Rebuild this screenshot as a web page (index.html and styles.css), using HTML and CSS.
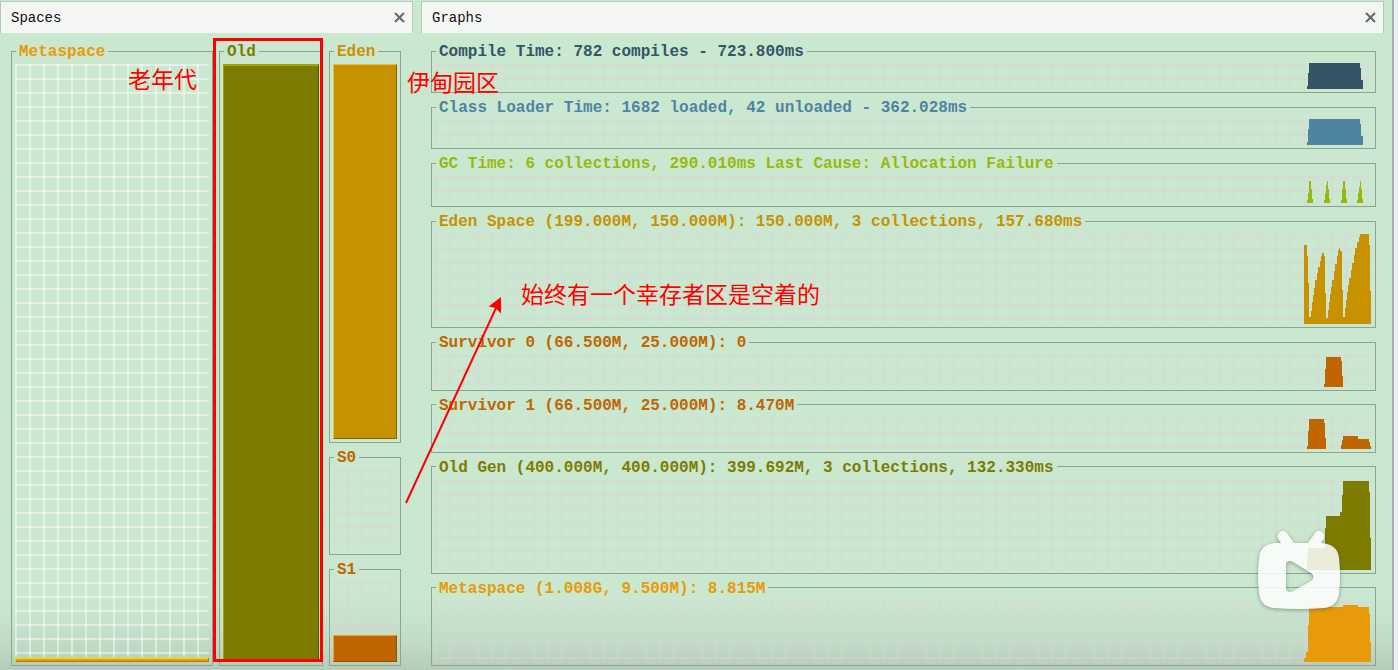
FILE: index.html
```html
<!DOCTYPE html>
<html lang="zh">
<head>
<meta charset="utf-8">
<title>Visual GC</title>
<link rel="stylesheet" href="styles.css">
</head>
<body>
<main class="window">
  <section class="panel">
    <header class="tab">
      <h2 class="tab-title">Spaces</h2>
      <button class="close" type="button" aria-label="Close Spaces"><svg viewBox="0 0 12 12"><path d="M1 1L10 10M10 1L1 10"/></svg></button>
    </header>
    <div class="spaces">
      <fieldset class="group tall meta"><legend>Metaspace</legend>
        <div class="space mesh"><div class="fill" style="height:5px"></div></div></fieldset>
      <fieldset class="group tall old marked"><legend>Old</legend>
        <div class="space"><div class="fill" style="height:100%"></div></div></fieldset>
      <fieldset class="group eden"><legend>Eden</legend>
        <div class="space"><div class="fill" style="height:100%"></div></div></fieldset>
      <fieldset class="group survivor"><legend>S0</legend>
        <div class="space faint"></div></fieldset>
      <fieldset class="group survivor"><legend>S1</legend>
        <div class="space faint"><div class="fill" style="height:34%"></div></div></fieldset>
    </div>
  </section>
  <section class="panel">
    <header class="tab">
      <h2 class="tab-title">Graphs</h2>
      <button class="close" type="button" aria-label="Close Graphs"><svg viewBox="0 0 12 12"><path d="M1 1L10 10M10 1L1 10"/></svg></button>
    </header>
    <div class="graphs">
      <fieldset class="group compile"><legend>Compile Time: 782 compiles - 723.800ms</legend>
        <div class="plot faint"><svg width="72" height="26"><path d="M7 26V23H8V10H9V0H60V5H61V17H63V26z"/></svg></div></fieldset>
      <fieldset class="group loader"><legend>Class Loader Time: 1682 loaded, 42 unloaded - 362.028ms</legend>
        <div class="plot faint"><svg width="72" height="26"><path d="M7 26V23H8V10H9V0H60V5H61V17H63V26z"/></svg></div></fieldset>
      <fieldset class="group gc"><legend>GC Time: 6 collections, 290.010ms Last Cause: Allocation Failure</legend>
        <div class="plot faint"><svg width="72" height="22"><path d="M7 22V19H8V12H9V0H11V8H12V18H13V22zM24 22V19H25V12H26V4H27V0H28V8H29V18H30V22zM41 22V19H42V8H43V0H45V8H46V18H47V22zM57 22V19H58V12H59V6H60V0H61V8H62V18H63V22z"/></svg></div></fieldset>
      <fieldset class="group eden"><legend>Eden Space (199.000M, 150.000M): 150.000M, 3 collections, 157.680ms</legend>
        <div class="plot faint"><svg width="72" height="90"><path d="M4 90V11H7V22H8V49H9V83H11V77H12V68H13V61H14V54H15V46H17V39H18V33H20V27H21V22H22V19H24V22H25V59H26V84H28V76H29V68H30V60H31V53H32V46H34V37H35V30H37V22H38V16H39V14H40V17H42V56H43V83H45V74H46V66H47V58H48V51H49V44H51V36H52V29H54V21H55V14H57V8H59V3H60V0H69V11H70V57H71V90z"/></svg></div></fieldset>
      <fieldset class="group survivor"><legend>Survivor 0 (66.500M, 25.000M): 0</legend>
        <div class="plot faint"><svg width="72" height="30"><path d="M24 30V27H25V12H26V0H41V4H42V19H43V30z"/></svg></div></fieldset>
      <fieldset class="group survivor"><legend>Survivor 1 (66.500M, 25.000M): 8.470M</legend>
        <div class="plot faint"><svg width="72" height="30"><path d="M7 30V27H8V12H9V0H24V4H25V19H26V30zM41 30V26H42V21H43V17H58V20H69V23H70V27H71V30z"/></svg></div></fieldset>
      <fieldset class="group old"><legend>Old Gen (400.000M, 400.000M): 399.692M, 3 collections, 132.330ms</legend>
        <div class="plot faint"><svg width="72" height="89"><path d="M7 89V77H8V67H23V67H25V47H26V35H40V31H42V14H43V0H69V11H70V57H71V89z"/></svg></div></fieldset>
      <fieldset class="group meta"><legend>Metaspace (1.008G, 9.500M): 8.815M</legend>
        <div class="plot faint"><svg width="72" height="57"><path d="M4 57V53H6V47H8V20H9V2H43V0H58V2H69V9H70V37H71V57z"/></svg></div></fieldset>
    </div>
  </section>
  <p class="note note-old">老年代</p>
  <p class="note note-eden">伊甸园区</p>
  <p class="note note-survivor">始终有一个幸存者区是空着的</p>
  <svg class="arrow" width="102" height="210" viewBox="0 0 102 210"><path class="shaft" d="M6 208L96 13"/><path class="head" d="M100 4L91 11L96 12L100 16z"/></svg>
  <svg class="logo" width="94" height="90" viewBox="0 0 94 90" role="img" aria-label="Play video"><path fill-rule="evenodd" d="M27 7C29 4 33 4 35 7L42 17H56L63 7C65 4 69 4 71 7C73 9 73 11 71 14L69 17C81 18 86 23 87 32Q89 50 87 67C86 76 81 81 72 82Q47 84 22 82C13 81 8 76 7 67Q5 50 7 32C8 23 13 18 23 17H29L27 14C25 11 25 9 27 7zM34 39V61C34 66 37 67 41 65L59 55Q64 51 59 47L41 36C37 34 34 35 34 39z"/></svg>
</main>
</body>
</html>
```

FILE: styles.css
```css
* { box-sizing: border-box; }

body {
  margin: 0;
  background: #eceff2;
  font-family: "Liberation Mono", monospace;
}

.window {
  position: relative;
  display: grid;
  grid-template-columns: 413fr 963fr;
  grid-template-rows: minmax(0, 1fr);
  gap: 8px;
  height: 100vh;
  min-height: 600px;
  margin-right: 4px;
  padding: 1px 8px 4px 0;
  border-right: 2px solid #a7b4ae;
  background: linear-gradient(to top, #b5ccb9 0, #c1dcc6 28px, #cae8d0 72px);
}

.panel {
  display: flex;
  flex-direction: column;
  min-width: 0;
  min-height: 0;
}

.tab {
  display: flex;
  align-items: center;
  justify-content: space-between;
  height: 32px;
  padding: 0 6px 0 10px;
  border: 1px solid #b4ccb8;
  border-bottom: 0;
  background: #f4f6f4;
}

.tab-title {
  margin: 0;
  color: #111;
  font-size: 14px;
  font-weight: 400;
}

.close {
  width: 12px;
  height: 12px;
  padding: 0;
  border: 0;
  background: none;
}

.close svg {
  display: block;
  fill: none;
  stroke: #646866;
  stroke-width: 2;
}

.spaces,
.graphs {
  display: grid;
  flex: 1;
  gap: 5px;
  min-height: 0;
}

.spaces {
  grid-template-columns: 202fr 104fr 72fr;
  grid-template-rows: 402fr 107fr 106fr;
  column-gap: 6px;
  padding: 9px 12px 0 11px;
}

.graphs {
  grid-template-rows: 51fr 51fr 53fr 116fr 57fr 57fr 116fr 87fr;
  padding: 9px 8px 0 10px;
}

.group {
  display: flex;
  flex-direction: column;
  min-width: 0;
  min-height: 0;
  margin: 0;
  padding: 0;
  border: 1px solid #8fa394;
}

.group legend {
  margin-left: 4px;
  padding: 2px 3px 0;
  color: var(--tone);
  font-size: 16px;
  font-weight: 700;
  line-height: 16px;
  white-space: nowrap;
}

.tall { grid-row: 1 / 4; }

.compile { --tone: #335566; }
.loader { --tone: #4f83a2; }
.gc { --tone: #9ab80c; }
.eden { --tone: #c89100; --light: #e8c030; --dark: #8a6400; }
.survivor { --tone: #c16500; --light: #eda03c; --dark: #9a5000; }
.old { --tone: #7d7b00; --light: #a4a600; --dark: #5c5a00; }
.meta { --tone: #e89a08; --light: #dcd850; --dark: #b87a00; }

.space {
  display: flex;
  flex: 1;
  align-items: flex-end;
  min-height: 0;
  margin: 4px 3px 3px;
}

.fill {
  flex: 1;
  border: 1px solid;
  border-color: var(--light) var(--dark) var(--dark) var(--light);
  background: var(--tone);
}

.tall .fill { border-top-width: 2px; }

.mesh,
.faint {
  background-image:
    linear-gradient(to right, var(--line) 2px, transparent 2px),
    linear-gradient(var(--line) 2px, transparent 2px);
  background-size: 14px 14px;
}

.mesh { --line: rgba(255, 255, 255, 0.45); }
.faint { --line: rgba(222, 208, 218, 0.4); }

.plot {
  display: flex;
  flex: 1;
  align-items: flex-end;
  justify-content: flex-end;
  min-height: 0;
  margin: 4px 3px 3px;
}

.plot svg {
  display: block;
  flex: none;
  fill: var(--tone);
}

.marked { position: relative; }

.marked::after {
  content: "";
  position: absolute;
  inset: -22px -1px 3px -7px;
  border: 3px solid #f00;
}

.note {
  position: absolute;
  margin: 0;
  color: #f00;
  font-family: "Noto Sans CJK SC", sans-serif;
  font-size: 23px;
  font-weight: 400;
  line-height: 30px;
  white-space: nowrap;
}

.note-old { top: 63px; left: 128px; }
.note-eden { top: 66px; left: 407px; }
.note-survivor { top: 278px; left: 521px; }

.arrow {
  position: absolute;
  top: 295px;
  left: 400px;
}

.shaft {
  stroke: #f00;
  stroke-width: 2;
}

.head {
  fill: #f00;
  stroke: #f00;
  stroke-width: 2;
}

.logo {
  position: absolute;
  right: 46px;
  bottom: 54px;
  fill: #fff;
  opacity: 0.85;
  filter: drop-shadow(0 1px 2px rgba(60, 80, 65, 0.6));
}
```
